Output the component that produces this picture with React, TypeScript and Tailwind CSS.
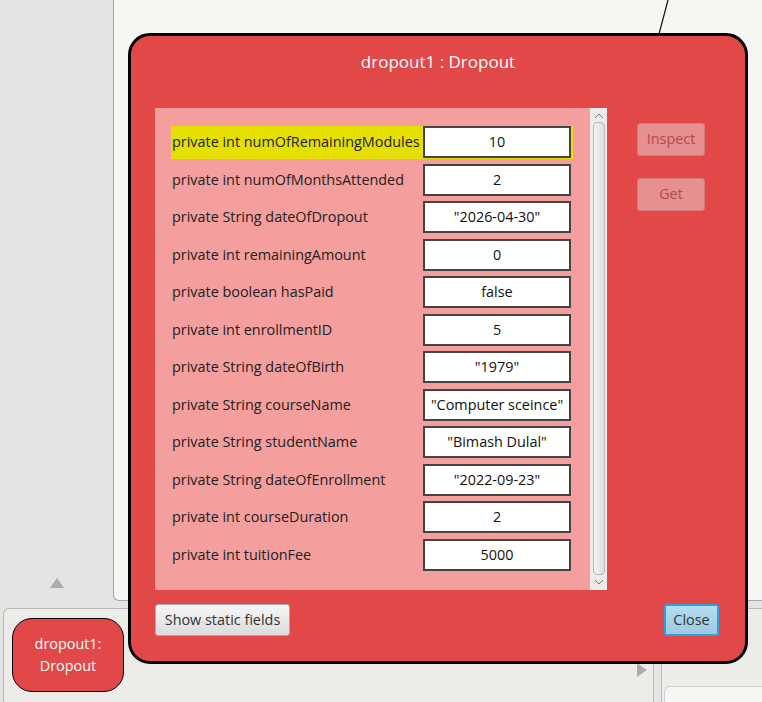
import React from "react";

// field rows shown in the inspector
const fields: { label: string; value: string }[] = [
    { label: "private int numOfRemainingModules", value: "10" },
    { label: "private int numOfMonthsAttended", value: "2" },
    { label: "private String dateOfDropout", value: "\"2026-04-30\"" },
    { label: "private int remainingAmount", value: "0" },
    { label: "private boolean hasPaid", value: "false" },
    { label: "private int enrollmentID", value: "5" },
    { label: "private String dateOfBirth", value: "\"1979\"" },
    { label: "private String courseName", value: "\"Computer sceince\"" },
    { label: "private String studentName", value: "\"Bimash Dulal\"" },
    { label: "private String dateOfEnrollment", value: "\"2022-09-23\"" },
    { label: "private int courseDuration", value: "2" },
    { label: "private int tuitionFee", value: "5000" },
];

const FieldRow: React.FC<{ label: string; value: string; selected?: boolean }> = ({ label, value, selected }) => {
    return (
        <div
            className={
                selected
                    ? "flex h-[33px] items-center justify-between bg-[#e6e000] pl-[1px] pr-[2px]"
                    : "flex h-[33px] items-center justify-between pl-[1px] pr-[2px]"
            }
        >
            <span className="text-[14.4px] text-[#222]">{label}</span>
            <div className="flex h-[32px] w-[148px] items-center justify-center border-2 border-[#444] bg-white text-[14.4px] text-[#111]">
                {value}
            </div>
        </div>
    );
};

export default function App() {
    return (
        <div
            className="relative h-[702px] w-[762px] overflow-hidden bg-[#e4e4e4]"
            style={{ fontFamily: '"Open Sans", "Noto Sans", sans-serif' }}
        >
            {/* top area: sidebar + class diagram canvas */}
            <div className="flex h-[601px]">
                <div className="relative w-[113px]">
                    {/* up arrow */}
                    <div className="absolute left-[50px] top-[578px] h-0 w-0 border-x-[7px] border-b-[10px] border-x-transparent border-b-[#acacac]" />
                </div>
                <div className="flex-1 rounded-bl-[6px] border-b border-l border-[#a8a8a8] bg-[#f7f6f2]" />
            </div>

            {/* object bench */}
            <div className="mt-[7px] flex h-[94px]">
                <div className="ml-[3px] w-[650px] rounded-tl-[6px] border-l border-t border-[#b8b8b8] bg-[#edece8] pl-[8px] pt-[9px]">
                    <div className="flex h-[74px] w-[112px] flex-col items-center justify-center rounded-[20px] border border-black bg-[#e34848] text-[14.4px] leading-[22px] text-white">
                        <span>dropout1:</span>
                        <span>Dropout</span>
                    </div>
                </div>
                <div className="w-[9px] border-l border-r border-[#bdbdbd] bg-[#e4e4e4]" />
                <div className="flex flex-1 flex-col border-t border-[#b8b8b8] bg-[#edece8] pl-[2px] pt-[77px]">
                    <div className="flex-1 rounded-tl-[6px] border-l border-t border-[#cfcfcf] bg-[#f7f6f2]" />
                </div>
            </div>

            {/* right arrow of the bench */}
            <div className="absolute left-[637px] top-[663px] h-0 w-0 border-y-[7px] border-l-[10px] border-y-transparent border-l-[#acacac]" />

            {/* dependency line on the canvas */}
            <svg className="absolute left-0 top-0" width="762" height="40">
                <line x1="668" y1="0" x2="659" y2="34" stroke="#111" strokeWidth="1.2" />
            </svg>

            {/* inspector dialog */}
            <div className="absolute left-[128px] top-[33px] flex h-[631px] w-[620px] flex-col rounded-[22px] border-[3px] border-black bg-[#e34848] px-[24px]">
                <div className="pt-[13px] text-center text-[17px] text-white">dropout1 : Dropout</div>

                <div className="mt-[33px] flex">
                    {/* fields list with scrollbar */}
                    <div className="flex h-[482px] w-[452px] bg-[#f49e9e]">
                        <div className="flex flex-1 flex-col gap-[4.5px] pl-[16px] pr-[17px] pt-[18px]">
                            {fields.map((f, i) => (
                                <FieldRow key={f.label} label={f.label} value={f.value} selected={i === 0} />
                            ))}
                        </div>
                        <div className="flex w-[17px] flex-col items-center bg-[#ececec]">
                            <svg width="12" height="10" viewBox="0 0 12 10" className="mt-[3px]">
                                <path d="M2 7 L6 3 L10 7" fill="none" stroke="#777" strokeWidth="1" />
                            </svg>
                            <div className="mt-[1px] w-[12px] flex-1 rounded-[4px] border border-[#b8b8b8] bg-gradient-to-r from-[#f4f4f4] to-[#dedede]" />
                            <svg width="12" height="10" viewBox="0 0 12 10" className="mb-[3px] mt-[2px]">
                                <path d="M2 3 L6 7 L10 3" fill="none" stroke="#777" strokeWidth="1" />
                            </svg>
                        </div>
                    </div>

                    {/* side buttons (disabled) */}
                    <div className="ml-[30px] flex flex-col gap-[22px] pt-[15px]">
                        <div className="flex h-[33px] w-[68px] items-center justify-center rounded-[3px] border border-[#d97a7a] bg-[#e69090] text-[14.4px] text-[#b44a4a]">
                            Inspect
                        </div>
                        <div className="flex h-[33px] w-[68px] items-center justify-center rounded-[3px] border border-[#d97a7a] bg-[#e69090] text-[14.4px] text-[#b44a4a]">
                            Get
                        </div>
                    </div>
                </div>

                {/* bottom buttons */}
                <div className="mt-[14px] flex items-start justify-between pr-[2px]">
                    <div className="flex h-[32px] w-[135px] items-center justify-center rounded-[3px] border border-[#aaa] bg-gradient-to-b from-[#f6f6f6] to-[#dcdcdc] text-[14.4px] text-[#333]">
                        Show static fields
                    </div>
                    <div className="flex h-[32px] w-[55px] items-center justify-center rounded-[3px] border-2 border-[#2aa3dc] bg-gradient-to-b from-[#b6dcef] to-[#9ccbe3] text-[14.4px] text-[#333]">
                        Close
                    </div>
                </div>
            </div>
        </div>
    );
}
